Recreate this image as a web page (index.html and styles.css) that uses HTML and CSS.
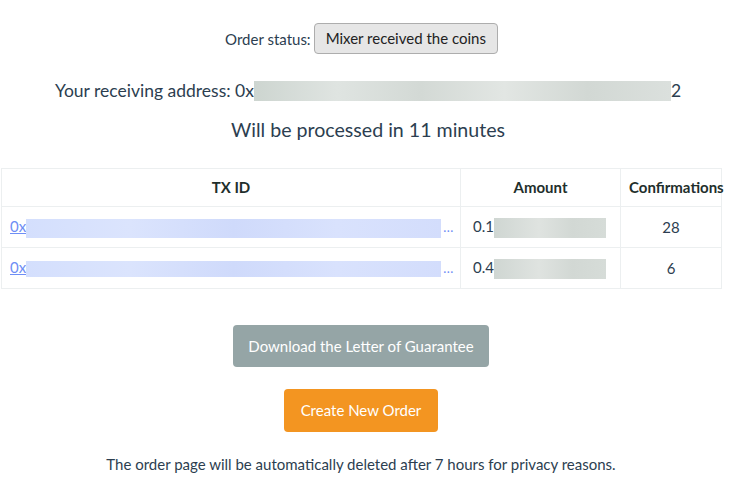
FILE: index.html
```html
<!DOCTYPE html>
<html>
<head>
<meta charset="utf-8">
<link rel="stylesheet" href="styles.css">
</head>
<body>
<div class="page">
  <div class="status-row">
    <span class="status-label">Order status:</span>
    <span class="status-btn">Mixer received the coins</span>
  </div>
  <div class="address">Your receiving address: 0x<span class="blur blur-addr"></span>2</div>
  <div class="processed">Will be processed in 11 minutes</div>
  <table class="tx-table">
    <colgroup>
      <col class="c1"><col class="c2"><col class="c3">
    </colgroup>
    <thead>
      <tr><th>TX ID</th><th>Amount</th><th class="th-conf">Confirmations</th></tr>
    </thead>
    <tbody>
      <tr>
        <td class="txid"><a href="#">0x</a><span class="blur blur-tx a"></span><span class="dots">...</span></td>
        <td class="amount">0.1<span class="blur blur-amt"></span></td>
        <td class="conf">28</td>
      </tr>
      <tr>
        <td class="txid"><a href="#">0x</a><span class="blur blur-tx b"></span><span class="dots">...</span></td>
        <td class="amount">0.4<span class="blur blur-amt"></span></td>
        <td class="conf">6</td>
      </tr>
    </tbody>
  </table>
  <a class="btn btn-gray" href="#">Download the Letter of Guarantee</a>
  <a class="btn btn-orange" href="#">Create New Order</a>
  <p class="note">The order page will be automatically deleted after 7 hours for privacy reasons.</p>
</div>
</body>
</html>
```
FILE: styles.css
```css
html, body {
  margin: 0;
  padding: 0;
  background: #fff;
}
body {
  font-family: Lato, "Open Sans", sans-serif;
  color: #2c3e50;
  font-size: 15px;
}
.page {
  width: 722px;
  display: flex;
  flex-direction: column;
  align-items: center;
  padding-top: 23px;
}
.status-row {
  display: flex;
  align-items: center;
  gap: 3px;
  font-size: 15px;
  margin-left: 1px;
}
.status-btn {
  display: inline-block;
  line-height: 21px;
  padding: 4px 11px;
  border: 1px solid #adadad;
  border-radius: 4px;
  background: #e6e6e6;
  color: #222;
}
.address {
  margin-top: 25px;
  font-size: 17.5px;
  line-height: 24px;
  margin-left: 14px;
  display: flex;
  align-items: center;
}
.blur {
  display: inline-block;
}
.blur-addr {
  width: 417px;
  height: 20px;
  background: linear-gradient(90deg, #cdd5d0 0%, #dfe4e1 20%, #d3d9d5 40%, #e2e6e3 60%, #d2d8d4 80%, #dbe0dd 100%);
}
.processed {
  margin-top: 15px;
  font-size: 19.6px;
  line-height: 24px;
  margin-left: 14px;
}
.tx-table {
  margin-top: 26px;
  width: 720px;
  align-self: flex-end;
  border-collapse: collapse;
  table-layout: fixed;
  font-size: 15px;
}
.c1 { width: 459px; }
.c2 { width: 160px; }
.c3 { width: 101px; }
.tx-table th,
.tx-table td {
  border: 1px solid #eceff0;
  line-height: 21px;
  white-space: nowrap;
}
.tx-table th {
  height: 37px;
  padding: 0 8px;
  font-weight: bold;
  text-align: center;
  color: #1f2f2c;
}
.tx-table .th-conf {
  text-align: left;
}
.tx-table td {
  height: 40px;
  padding: 0 8px;
}
.txid a {
  color: #6e8ef5;
  text-decoration: underline;
}
.blur-tx {
  width: 415px;
  height: 19px;
  vertical-align: middle;
  background: linear-gradient(90deg, #d4dffd 0%, #dbe4fd 25%, #cfdafb 50%, #d9e2fd 75%, #d3ddfc 100%);
}
.blur-tx.b {
  height: 16px;
}
.dots {
  color: #6e8ef5;
  margin-left: 2px;
  font-size: 13px;
  letter-spacing: 0.5px;
}
.tx-table .amount {
  padding-left: 12px;
}
.blur-amt {
  width: 112px;
  height: 20px;
  vertical-align: middle;
  background: linear-gradient(90deg, #cfd6d2 0%, #dfe3e0 40%, #d2d8d4 70%, #d6dcd8 100%);
}
.conf {
  text-align: center;
}
.btn {
  display: inline-block;
  text-decoration: none;
  color: #fff;
  font-size: 15px;
  line-height: 24px;
  border-radius: 4px;
}
.btn-gray {
  margin-top: 36px;
  padding: 9px 15px;
  background: #95a5a6;
}
.btn-orange {
  margin-top: 22px;
  padding: 9px 17px 10px;
  background: #f39521;
}
.note {
  margin: 22px 0 0;
  line-height: 20px;
  font-size: 15px;
}
```
